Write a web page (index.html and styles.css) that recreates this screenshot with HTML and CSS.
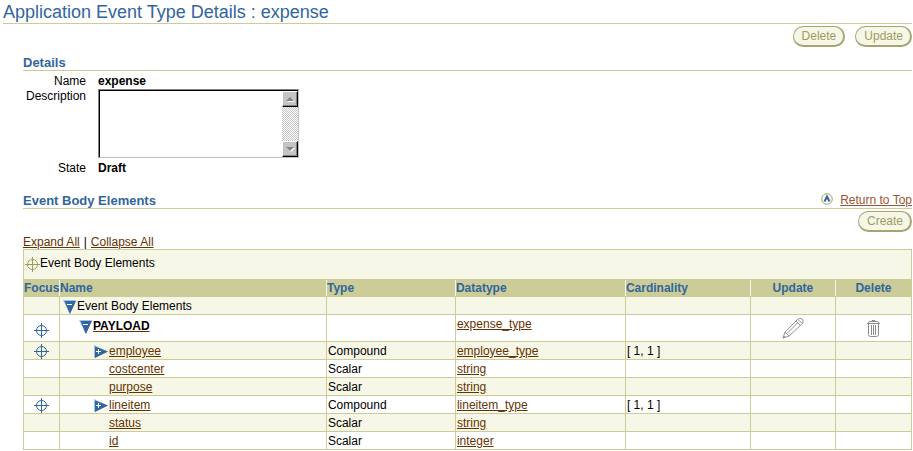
FILE: index.html
```
<!DOCTYPE html>
<html lang="en">
<head>
  <meta charset="UTF-8" />
  <meta name="viewport" content="width=device-width, initial-scale=1.0"/>
  <title>Application Event Type Details : expense</title>
  <link rel="stylesheet" href="styles.css">
</head>

<body id="top">
  <!-- Shared icons -->
  <svg class="sprite" aria-hidden="true">
    <symbol id="focus" viewBox="0 0 15 15">
      <circle cx="7.5" cy="7.5" r="5" fill="none" stroke="currentColor" />
      <path d="M7.5 0v15M0 7.5h15" fill="none" stroke="currentColor" />
    </symbol>
    <symbol id="open" viewBox="0 0 13 14">
      <path d="M0 0h13L6.5 14z" fill="#9cc3e8" />
      <path d="M1.5 1H13L7 14z" fill="#31659c" />
      <path d="M4 4.5h5" stroke="#fff" />
    </symbol>
    <symbol id="closed" viewBox="0 0 14 13">
      <path d="M0 0l14 6.5L0 13z" fill="#9cc3e8" />
      <path d="M1 1.5l13 5L1 13z" fill="#31659c" />
      <path d="M2 6.5h5M4.5 4v5" stroke="#fff" />
    </symbol>
  </svg>

  <header class="page-header">
    <h1>Application Event Type Details : expense</h1>
  </header>

  <div class="actions page-actions">
    <button type="button" class="btn">Delete</button>
    <button type="button" class="btn">Update</button>
  </div>

  <main>
    <section>
      <div class="section-title">
        <h2>Details</h2>
      </div>
      <div class="details">
        <span class="label">Name</span>
        <strong>expense</strong>
        <label class="label" for="description">Description</label>
        <div class="text-box">
          <textarea id="description"></textarea>
          <div class="scrollbar">
            <button type="button" class="scroll-btn" aria-label="Scroll up">
              <svg width="9" height="5" viewBox="0 0 9 5"><path d="M1 5h8L5 1z" fill="#fff" /><path d="M0 4h8L4 0z" fill="#848284" /></svg>
            </button>
            <button type="button" class="scroll-btn" aria-label="Scroll down">
              <svg width="9" height="5" viewBox="0 0 9 5"><path d="M1 1h8L5 5z" fill="#fff" /><path d="M0 0h8L4 4z" fill="#848284" /></svg>
            </button>
          </div>
        </div>
        <span class="label">State</span>
        <strong>Draft</strong>
      </div>
    </section>

    <section class="elements">
      <div class="section-title">
        <h2>Event Body Elements</h2>
        <a href="#top" class="return-link">
          <svg width="12" height="12" viewBox="0 0 12 12">
            <circle cx="6" cy="6" r="5.3" fill="#fff" stroke="#a5a573" />
            <path d="M3.5 8.5L6 3.5l2.5 5" fill="none" stroke="#31659c" stroke-width="2" />
          </svg>
          <span>Return to Top</span>
        </a>
      </div>
      <div class="actions">
        <button type="button" class="btn">Create</button>
      </div>
      <div class="tree-links">
        <a href="#">Expand All</a>
        <span>|</span>
        <a href="#">Collapse All</a>
      </div>

      <table>
        <colgroup>
          <col class="col-focus"><col><col class="col-type"><col class="col-datatype">
          <col class="col-cardinality"><col class="col-update"><col class="col-delete">
        </colgroup>
        <thead>
          <tr class="crumb">
            <td colspan="7">
              <div class="node"><svg class="focus" width="15" height="15"><use href="#focus" /></svg><span>Event Body Elements</span></div>
            </td>
          </tr>
          <tr>
            <th scope="col">Focus</th>
            <th scope="col">Name</th>
            <th scope="col">Type</th>
            <th scope="col">Datatype</th>
            <th scope="col">Cardinality</th>
            <th scope="col" class="center">Update</th>
            <th scope="col" class="center">Delete</th>
          </tr>
        </thead>
        <tbody>
          <tr>
            <td></td>
            <td><div class="node level-0"><svg width="13" height="14"><use href="#open" /></svg><span>Event Body Elements</span></div></td>
            <td></td>
            <td></td>
            <td></td>
            <td></td>
            <td></td>
          </tr>
          <tr class="payload">
            <td><svg class="focus" width="15" height="15"><use href="#focus" /></svg></td>
            <td><div class="node level-1"><svg width="13" height="14"><use href="#open" /></svg><a href="#">PAYLOAD</a></div></td>
            <td></td>
            <td><a href="#">expense_type</a></td>
            <td></td>
            <td>
              <button type="button" class="icon-btn" aria-label="Update">
                <svg width="22" height="22" viewBox="0 0 22 22" fill="none" stroke="#949494">
                  <path d="M1 21l2-6L15.500 2.500Q18 .5 20 2t.5 4.500L7 19z" />
                  <path d="M3 15l4 4M14 4l4.500 4.500M16 2.500l4 4M5 16.500L15.500 6" />
                  <path d="M1 21l2-1-1-1z" fill="#949494" />
                </svg>
              </button>
            </td>
            <td>
              <button type="button" class="icon-btn" aria-label="Delete">
                <svg width="13" height="17" viewBox="0 0 13 17" fill="none" stroke="#8c8c8c">
                  <path d="M0 3.500h13M1 2.500l2-1h7l2 1M5 1V.5h3V1M1.500 4v10.500q0 2 2 2h6q2 0 2-2V4M4.500 5v10M6.500 5v10M8.500 5v10" />
                </svg>
              </button>
            </td>
          </tr>
          <tr>
            <td><svg class="focus" width="15" height="15"><use href="#focus" /></svg></td>
            <td><div class="node level-2"><svg width="14" height="13"><use href="#closed" /></svg><a href="#">employee</a></div></td>
            <td>Compound</td>
            <td><a href="#">employee_type</a></td>
            <td>[ 1, 1 ]</td>
            <td></td>
            <td></td>
          </tr>
          <tr>
            <td></td>
            <td><div class="node leaf"><a href="#">costcenter</a></div></td>
            <td>Scalar</td>
            <td><a href="#">string</a></td>
            <td></td>
            <td></td>
            <td></td>
          </tr>
          <tr>
            <td></td>
            <td><div class="node leaf"><a href="#">purpose</a></div></td>
            <td>Scalar</td>
            <td><a href="#">string</a></td>
            <td></td>
            <td></td>
            <td></td>
          </tr>
          <tr>
            <td><svg class="focus" width="15" height="15"><use href="#focus" /></svg></td>
            <td><div class="node level-2"><svg width="14" height="13"><use href="#closed" /></svg><a href="#">lineitem</a></div></td>
            <td>Compound</td>
            <td><a href="#">lineitem_type</a></td>
            <td>[ 1, 1 ]</td>
            <td></td>
            <td></td>
          </tr>
          <tr>
            <td></td>
            <td><div class="node leaf"><a href="#">status</a></div></td>
            <td>Scalar</td>
            <td><a href="#">string</a></td>
            <td></td>
            <td></td>
            <td></td>
          </tr>
          <tr>
            <td></td>
            <td><div class="node leaf"><a href="#">id</a></div></td>
            <td>Scalar</td>
            <td><a href="#">integer</a></td>
            <td></td>
            <td></td>
            <td></td>
          </tr>
        </tbody>
      </table>
    </section>
  </main>
</body>
</html>
```

FILE: styles.css
```
* {
  box-sizing: border-box;
}

body {
  margin: 0;
  padding: 2px 1px 0 3px;
  font-family: "Liberation Sans", Arial, sans-serif;
  font-size: 12px;
  line-height: 15px;
  background: #fff;
  color: #000;
}

.sprite {
  display: none;
}

svg {
  display: block;
  flex: none;
}

a {
  color: #663300;
}

/* Headings */
h1, h2 {
  margin: 0;
  color: #31659c;
}

h1 {
  font-size: 18px;
  font-weight: normal;
  line-height: 21px;
}

h2 {
  font-size: 13px;
  line-height: 15px;
}

.page-header {
  border-bottom: 1px solid #cccc99;
}

main {
  padding-left: 20px;
}

.section-title {
  display: flex;
  justify-content: space-between;
  align-items: flex-end;
  padding-top: 1px;
  border-bottom: 1px solid #cccc99;
}

/* Buttons */
.actions {
  display: flex;
  justify-content: flex-end;
  gap: 10px;
  padding-top: 2px;
}

.page-actions {
  padding-bottom: 7px;
}

.btn {
  height: 21px;
  padding: 1px 7px 0 8px;
  border: 1px solid #a5a573;
  border-right-width: 2px;
  border-bottom-width: 2px;
  border-radius: 11px;
  background: #f7f7e7;
  color: #9c9c63;
  font-family: inherit;
  font-size: 12px;
  line-height: 17px;
  cursor: pointer;
}

.icon-btn {
  display: block;
  margin: 0 auto;
  padding: 0;
  border: none;
  background: none;
  cursor: pointer;
}

/* Details form */
.details {
  display: grid;
  grid-template-columns: 63px 1fr;
  column-gap: 12px;
  padding-top: 3px;
}

.label {
  text-align: right;
}

.text-box {
  display: flex;
  width: 201px;
  height: 69px;
  margin-bottom: 3px;
  border: 1px solid #c6c3c6;
  border-top-color: #848284;
  border-left-color: #848284;
}

textarea {
  flex: 1;
  min-width: 0;
  padding: 2px;
  border: 0 solid #000;
  border-width: 1px 0 0 1px;
  outline: none;
  resize: none;
  font-family: inherit;
  font-size: 12px;
}

.scrollbar {
  display: flex;
  flex-direction: column;
  justify-content: space-between;
  width: 16px;
  border-top: 1px solid #000;
  background: repeating-conic-gradient(#c6c3c6 0 25%, #fff 0 50%) 0 0 / 2px 2px;
}

.scroll-btn {
  display: flex;
  align-items: center;
  justify-content: center;
  width: 16px;
  height: 16px;
  padding: 0;
  border: 1px solid #fff;
  border-right-color: #000;
  border-bottom-color: #000;
  background: #c6c3c6;
  box-shadow: inset -1px -1px #848284;
}

/* Event body elements */
.elements {
  padding-top: 16px;
}

.return-link {
  display: flex;
  gap: 7px;
  color: #9c5531;
}

.tree-links {
  display: flex;
  gap: 4px;
  padding-top: 3px;
  line-height: 14px;
}

table {
  width: 100%;
  border-collapse: collapse;
  table-layout: fixed;
}

.col-focus {
  width: 36px;
}

.col-type {
  width: 129px;
}

.col-datatype {
  width: 170px;
}

.col-cardinality {
  width: 125px;
}

.col-update {
  width: 85px;
}

.col-delete {
  width: 76px;
}

th {
  height: 17px;
  padding: 0;
  border: 1px solid #f7f7e7;
  border-top-color: #cccc99;
  border-bottom-color: #cccc99;
  background: #cccc99;
  color: #31659c;
  line-height: 16px;
  text-align: left;
}

th:first-child {
  border-left-color: #cccc99;
}

th:last-child {
  border-right-color: #cccc99;
}

td {
  height: 18px;
  padding: 2px 1px 0;
  border: 1px solid #cccc99;
  vertical-align: top;
}

tbody tr:nth-child(odd) {
  background: #f7f7e7;
}

.center {
  text-align: center;
}

.focus {
  margin: 0 auto;
  color: #31659c;
}

.crumb td {
  height: 30px;
  padding-top: 6px;
}

.crumb {
  background: #f7f7e7;
}

.crumb .focus {
  margin: 1px 0 0;
  color: #9c9c63;
}

.payload td {
  height: 27px;
}

.payload .focus {
  margin-top: 6px;
}

.payload .node a {
  color: #000;
  font-weight: bold;
  text-decoration-color: #663300;
}

.payload .icon-btn {
  display: flex;
  align-items: center;
  height: 22px;
}

.node {
  display: flex;
}

/* Tree indents */
.level-0,
.level-1,
.level-2 {
  gap: 1px;
  align-items: center;
}

.level-0 {
  padding-left: 2px;
}

.level-1 {
  padding-top: 2px;
  padding-left: 18px;
}

.level-2 {
  padding-left: 33px;
}

.leaf {
  padding-left: 48px;
}
```
